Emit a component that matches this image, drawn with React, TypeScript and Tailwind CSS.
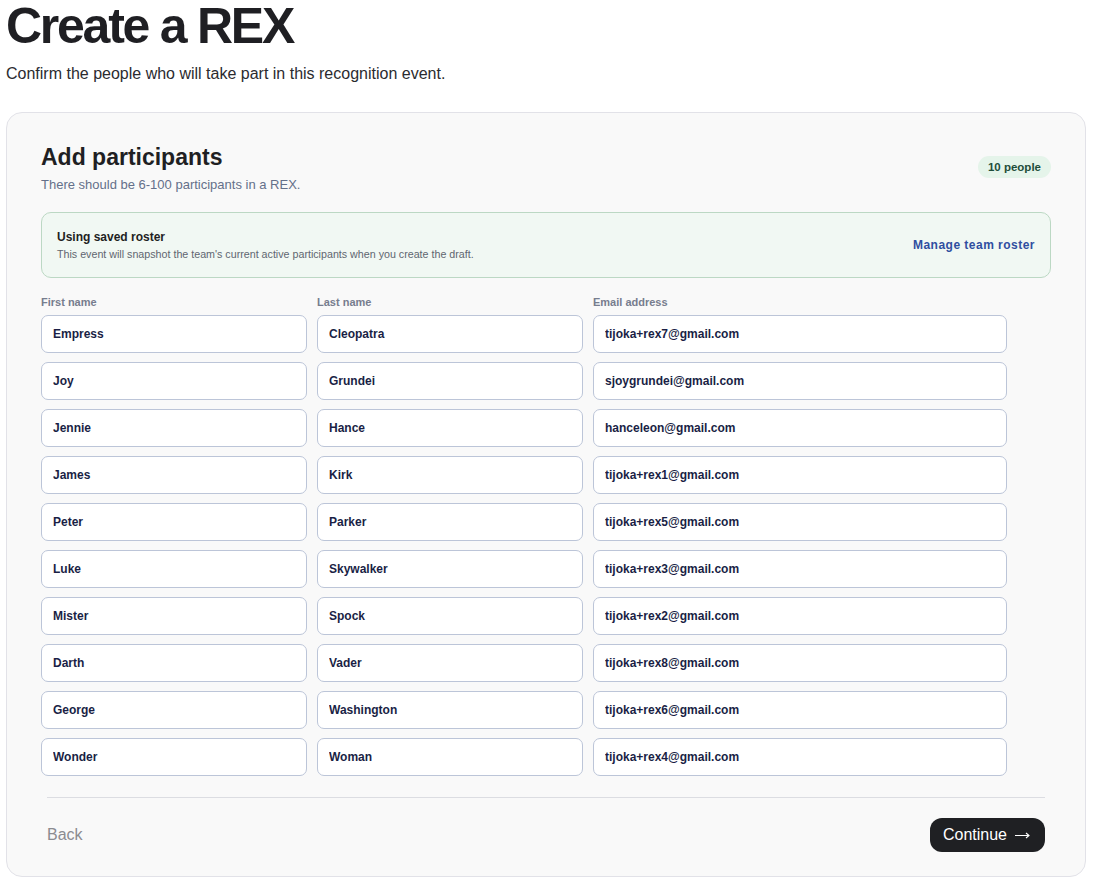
const participants = [
  { first: "Empress", last: "Cleopatra", email: "tijoka+rex7@gmail.com" },
  { first: "Joy", last: "Grundei", email: "sjoygrundei@gmail.com" },
  { first: "Jennie", last: "Hance", email: "hanceleon@gmail.com" },
  { first: "James", last: "Kirk", email: "tijoka+rex1@gmail.com" },
  { first: "Peter", last: "Parker", email: "tijoka+rex5@gmail.com" },
  { first: "Luke", last: "Skywalker", email: "tijoka+rex3@gmail.com" },
  { first: "Mister", last: "Spock", email: "tijoka+rex2@gmail.com" },
  { first: "Darth", last: "Vader", email: "tijoka+rex8@gmail.com" },
  { first: "George", last: "Washington", email: "tijoka+rex6@gmail.com" },
  { first: "Wonder", last: "Woman", email: "tijoka+rex4@gmail.com" },
];

function Field({ value }: { value: string }) {
  return (
    <input
      readOnly
      value={value}
      className="h-[38px] w-full rounded-[7px] border border-[#bcc5d8] bg-white px-[11px] text-[12px] font-bold text-[#1a1f45] outline-none"
    />
  );
}

export default function App() {
  return (
    <div className="min-h-screen bg-white pl-[6px] pr-[10px] font-['Liberation_Sans',Arial,sans-serif] text-[#1f1f23]">
      <h1 className="pt-[1px] text-[50px] font-bold leading-[50px] tracking-[-0.045em]">Create a REX</h1>
      <p className="mt-[11px] text-[16px] leading-[24px] text-[#2b2b2f]">
        Confirm the people who will take part in this recognition event.
      </p>

      <section className="mt-[26px] rounded-[16px] border border-[#e2e2e8] bg-[#f9f9f9] px-[34px] pb-[24px] pt-[29px]">
        <div className="flex items-start justify-between">
          <div>
            <h2 className="text-[23px] font-bold leading-[30px]">Add participants</h2>
            <p className="mt-[4px] text-[13px] leading-[18px] text-[#64708a]">
              There should be 6-100 participants in a REX.
            </p>
          </div>
          <span className="mt-[14px] rounded-full bg-[#e5f4ea] px-[10px] py-[4px] text-[11.5px] font-bold leading-[14px] text-[#1e4d3a]">
            10 people
          </span>
        </div>

        <div className="mt-[18px] flex h-[66px] items-center justify-between rounded-[10px] border border-[#bcd8c4] bg-[#f1f8f3] px-[15px]">
          <div>
            <p className="text-[12px] font-bold leading-[16px] text-[#1f1f23]">Using saved roster</p>
            <p className="mt-[3px] text-[10.7px] leading-[13px] text-[#5f6670]">
              This event will snapshot the team's current active participants when you create the draft.
            </p>
          </div>
          <a className="text-[12px] font-bold tracking-[0.04em] text-[#2f4ea0]">Manage team roster</a>
        </div>

        <div className="mt-[18px] grid grid-cols-[266px_266px_414px] gap-x-[10px] gap-y-[9px]">
          <span className="-mb-[3px] text-[11px] font-bold leading-[13px] text-[#777d8e]">First name</span>
          <span className="-mb-[3px] text-[11px] font-bold leading-[13px] text-[#777d8e]">Last name</span>
          <span className="-mb-[3px] text-[11px] font-bold leading-[13px] text-[#777d8e]">Email address</span>
          {participants.map((p) => (
            <div key={p.email} className="contents">
              <Field value={p.first} />
              <Field value={p.last} />
              <Field value={p.email} />
            </div>
          ))}
        </div>

        <div className="mx-[6px] mt-[21px] border-t border-[#dcdde2] pt-[20px]">
          <div className="flex items-center justify-between">
            <button className="text-[16px] text-[#8b8b90]">Back</button>
            <button className="flex h-[34px] items-center gap-[8px] rounded-[12px] bg-[#1f2023] pl-[13px] pr-[15px] text-[16px] text-white">
              Continue
              <svg aria-hidden="true" width="15" height="10" viewBox="0 0 15 10" fill="none" stroke="currentColor" strokeWidth="1.1">
                <path d="M0 5.5h14M11 3l3 2.5-3 2.5" />
              </svg>
            </button>
          </div>
        </div>
      </section>
    </div>
  );
}
